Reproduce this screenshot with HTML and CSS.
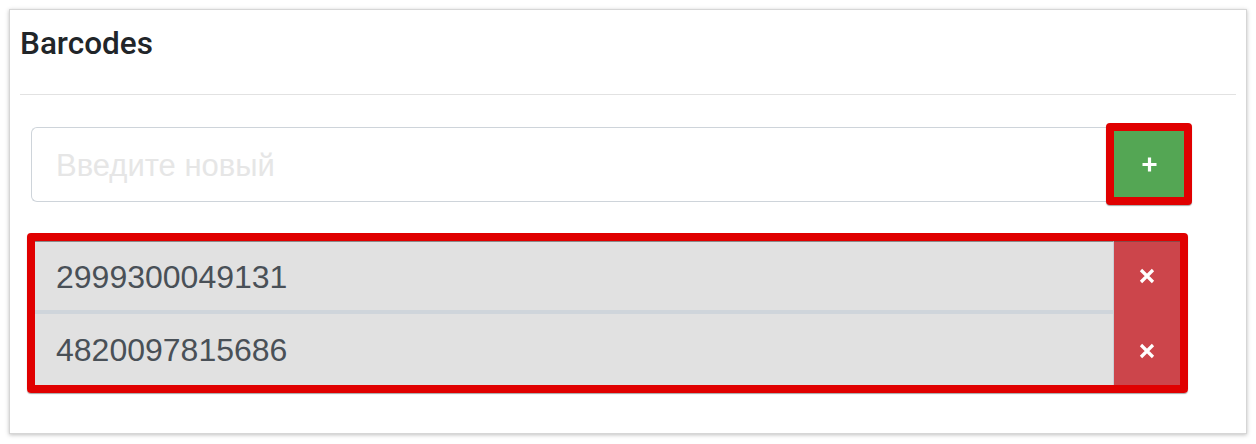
FILE: index.html
```html
<!DOCTYPE html>
<html>
  <head>
    <meta charset="UTF-8" />
    <title>Barcodes</title>
    <link rel="stylesheet" href="styles.css">
  </head>

  <body>
    <div class="card">
      <div class="card-header">Barcodes</div>

      <div class="card-body">
        <div class="add-row">
          <input type="text" class="barcode-input" placeholder="Введите новый" />
          <button class="add-btn" title="Add">
            <svg width="17" height="17" viewBox="0 0 17 17">
              <path d="M8.5 1.5v14M1.5 8.5h14" stroke="#fff" stroke-width="3.2" fill="none" />
            </svg>
          </button>
        </div>

        <div class="barcode-list">
          <div class="barcode-values">
            <div class="barcode-item first">2999300049131</div>
            <div class="barcode-item">4820097815686</div>
          </div>
          <div class="barcode-actions">
            <button class="remove-btn">
              <svg width="16" height="16" viewBox="0 0 16 16">
                <path d="M2 2l12 12M14 2L2 14" stroke="#fff" stroke-width="3.2" fill="none" />
              </svg>
            </button>
            <button class="remove-btn last">
              <svg width="16" height="16" viewBox="0 0 16 16">
                <path d="M2 2l12 12M14 2L2 14" stroke="#fff" stroke-width="3.2" fill="none" />
              </svg>
            </button>
          </div>
        </div>
      </div>
    </div>
  </body>
</html>
```

FILE: styles.css
```css
body {
  font-family: "Liberation Sans", Arial, sans-serif;
  margin: 0;
  padding: 9px;
  background: #fff;
}

.card {
  width: 1236px;
  height: 423px;
  border: 1px solid #d6d6d6;
  box-shadow: 0 1px 4px rgba(0, 0, 0, 0.25);
  background: #fff;
}

.card-header {
  margin: 0 10px;
  padding: 16px 0 32px;
  font-family: Roboto, "Liberation Sans", sans-serif;
  font-weight: 500;
  font-size: 31.5px;
  line-height: 36px;
  color: #212529;
  border-bottom: 1px solid #e2e2e2;
}

.card-body {
  padding: 28px 0 0 17px;
}

.add-row {
  display: flex;
  align-items: center;
  width: 1161px;
  margin-left: 4px;
}

.barcode-input {
  flex: 1;
  height: 75px;
  box-sizing: border-box;
  border: 1px solid #ced4da;
  border-right: none;
  border-radius: 6px 0 0 6px;
  padding: 4px 24px 0;
  font-family: inherit;
  font-size: 31px;
  color: #495057;
  outline: none;
}

.barcode-input::placeholder {
  color: #e6e6e6;
}

.add-btn {
  width: 86px;
  height: 82px;
  box-sizing: border-box;
  border: 8px solid #e00000;
  border-radius: 4px;
  background: #54a654;
  box-shadow: 0 1px 1px rgba(0, 0, 0, 0.35);
  display: flex;
  align-items: center;
  justify-content: center;
  padding: 0;
  cursor: pointer;
}

.barcode-list {
  display: flex;
  width: 1161px;
  height: 160px;
  box-sizing: border-box;
  margin-top: 28px;
  border: 8px solid #e00000;
  border-radius: 4px;
  box-shadow: 0 1px 1px rgba(0, 0, 0, 0.35);
}

.barcode-values {
  flex: 1;
  display: flex;
  flex-direction: column;
  border-top: 1px solid #8a8a8a;
  border-right: 1px solid #c9cfd5;
}

.barcode-item {
  flex: 1;
  display: flex;
  align-items: center;
  padding: 2px 0 0 21px;
  background: #e1e1e1;
  font-size: 32px;
  color: #495057;
}

.barcode-item.first {
  flex: 0 0 66px;
  border-bottom: 4px solid #cfd5db;
}

.barcode-actions {
  width: 66px;
  display: flex;
  flex-direction: column;
  background: #cc454b;
  border-top: 1px solid #8a4a4a;
}

.remove-btn {
  flex: 1;
  border: none;
  background: transparent;
  display: flex;
  align-items: center;
  justify-content: center;
  padding: 0;
  cursor: pointer;
}

.remove-btn.last {
  padding-top: 6px;
}
```
